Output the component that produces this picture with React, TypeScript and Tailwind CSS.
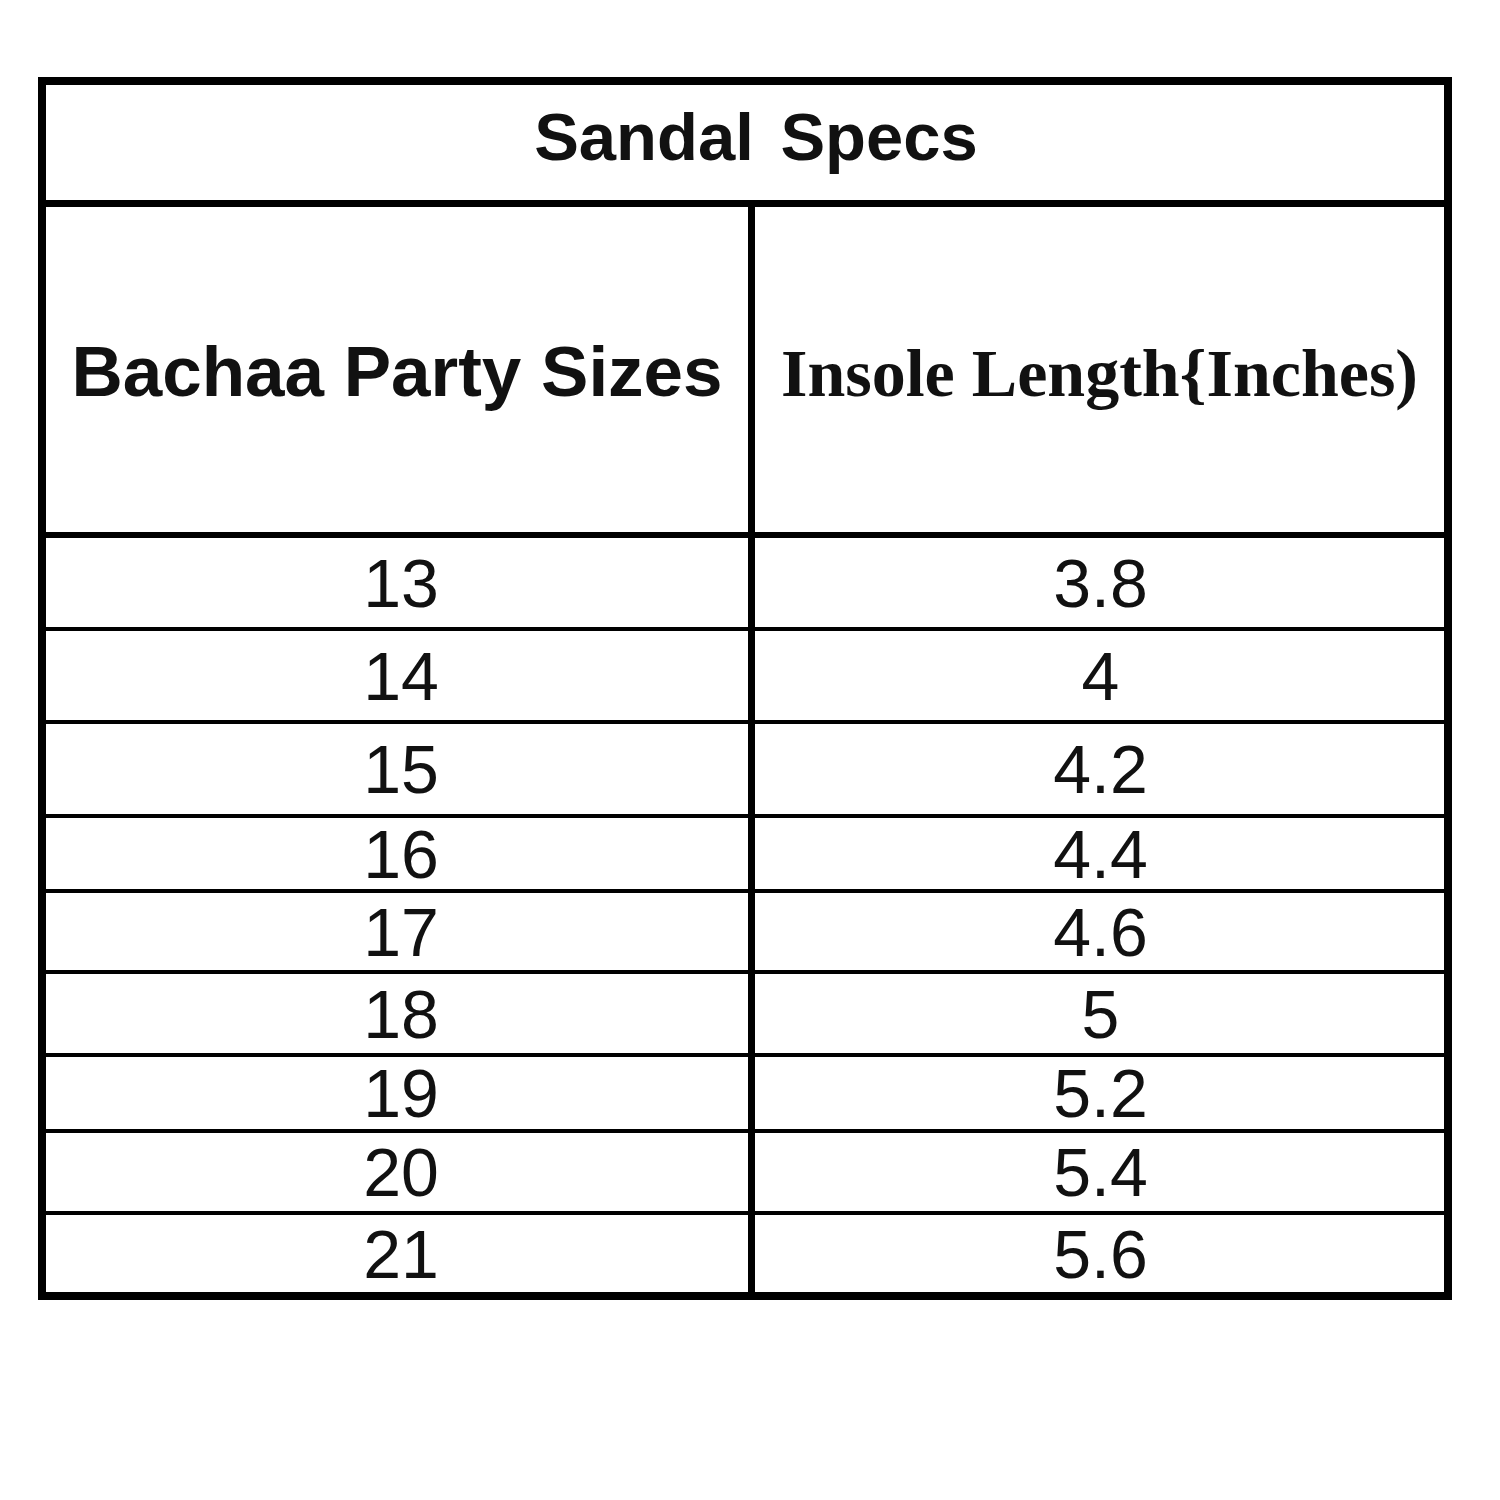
const rows = [
  { size: "13", length: "3.8", h: "h-[93px] border-b-4" },
  { size: "14", length: "4", h: "h-[93px] border-b-4" },
  { size: "15", length: "4.2", h: "h-[94px] border-b-4" },
  { size: "16", length: "4.4", h: "h-[75px] border-b-4" },
  { size: "17", length: "4.6", h: "h-[81px] border-b-4" },
  { size: "18", length: "5", h: "h-[83px] border-b-4" },
  { size: "19", length: "5.2", h: "h-[76px] border-b-4" },
  { size: "20", length: "5.4", h: "h-[82px] border-b-4" },
  { size: "21", length: "5.6", h: "h-[77px]" },
];

const App = () => {
  return (
    <div className="min-h-[1500px] w-[1500px] bg-white pt-[77px] pl-[38px] text-[#111]">
      <div className="w-[1414px] border-[8px] border-black font-['Liberation_Sans',Arial,sans-serif]">
        {/* Title */}
        <div className="flex h-[122px] items-center justify-center border-b-[7px] border-black pb-[12px] pl-[22px]">
          <h1 className="text-[67px] font-bold leading-none [word-spacing:8px]">Sandal Specs</h1>
        </div>

        {/* Header */}
        <div className="flex h-[331px] border-b-[6px] border-black">
          <div className="flex w-[709px] items-center justify-center border-r-[7px] border-black pt-[4px]">
            <span className="text-[71px] font-bold leading-none">Bachaa Party Sizes</span>
          </div>
          <div className="flex w-[689px] items-center justify-center pt-[6px]">
            <span className="font-['Liberation_Serif','Times_New_Roman',serif] text-[68px] font-bold leading-none">
              Insole Length{"{"}Inches)
            </span>
          </div>
        </div>

        {/* Rows */}
        {rows.map((row) => (
          <div key={row.size} className={`flex border-black ${row.h}`}>
            <div className="flex w-[709px] items-center justify-center border-r-[7px] border-black pl-[8px]">
              <span className="text-[68px] leading-none">{row.size}</span>
            </div>
            <div className="flex w-[689px] items-center justify-center pl-[2px]">
              <span className="text-[68px] leading-none">{row.length}</span>
            </div>
          </div>
        ))}
      </div>
    </div>
  );
};

export default App;
